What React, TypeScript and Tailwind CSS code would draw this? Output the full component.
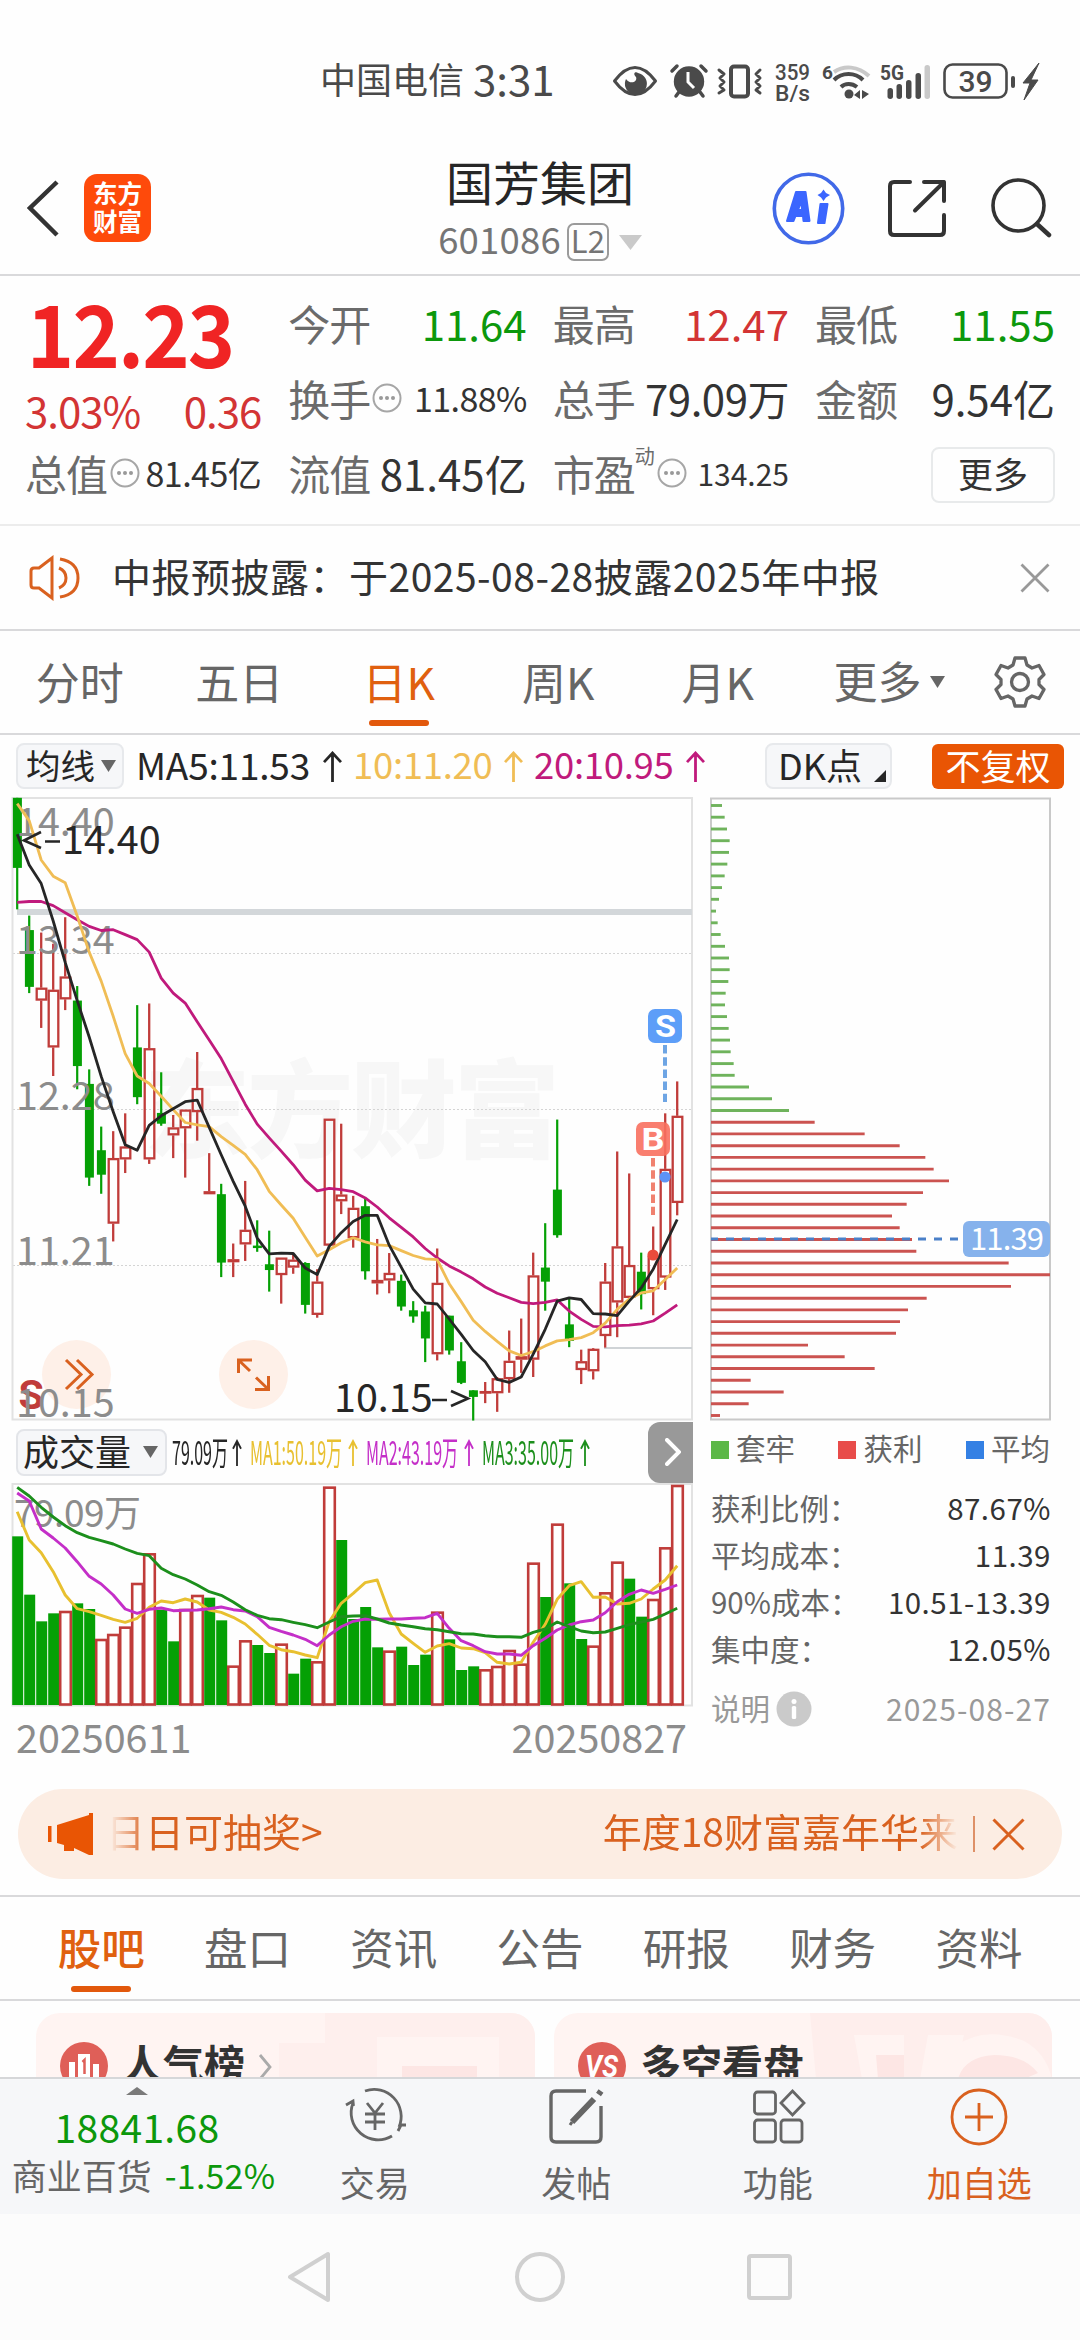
import React from "react";

/* ---------- chart data ---------- */

// [rising, high, bodyTop, bodyBottom, low], in chart ticks measured downwards
type Candle = [0 | 1, number, number, number, number];

const candles: Candle[] = [
  [0, 43, 43, 212, 312], [0, 327, 362, 499, 514], [1, 368, 501, 532, 598], [1, 395, 506, 645, 714],
  [1, 331, 474, 529, 555], [0, 497, 532, 690, 746], [0, 698, 733, 959, 979], [0, 836, 893, 952, 998],
  [1, 847, 912, 1070, 1113], [1, 804, 884, 915, 948], [0, 543, 645, 765, 782], [1, 539, 647, 915, 926],
  [0, 705, 803, 829, 834], [1, 808, 838, 857, 912], [1, 795, 795, 840, 959], [1, 656, 743, 801, 870],
  [1, 900, 992, 999, 999], [0, 974, 999, 1164, 1199], [1, 1118, 1156, 1163, 1199], [1, 967, 1085, 1120, 1160],
  [0, 1062, 1123, 1129, 1138], [0, 1087, 1168, 1182, 1234], [1, 1152, 1152, 1194, 1263], [1, 1145, 1157, 1176, 1191],
  [0, 1163, 1165, 1266, 1287], [1, 1180, 1210, 1290, 1297], [1, 817, 817, 1123, 1123], [1, 829, 1000, 1016, 1047],
  [1, 1003, 1032, 1105, 1128], [0, 1010, 1028, 1185, 1205], [1, 1107, 1206, 1214, 1241], [1, 1141, 1189, 1207, 1238],
  [0, 1193, 1208, 1270, 1280], [0, 1257, 1279, 1294, 1309], [0, 1268, 1282, 1347, 1404], [1, 1130, 1213, 1385, 1400],
  [0, 1292, 1292, 1376, 1386], [0, 1356, 1402, 1454, 1457], [0, 1472, 1472, 1488, 1545], [1, 1452, 1474, 1479, 1503],
  [1, 1440, 1443, 1479, 1524], [1, 1328, 1401, 1445, 1478], [1, 1299, 1390, 1398, 1430], [1, 1140, 1195, 1398, 1440],
  [0, 1069, 1176, 1210, 1280], [0, 819, 988, 1098, 1104], [0, 1250, 1313, 1353, 1368], [1, 1374, 1402, 1423, 1457],
  [1, 1370, 1372, 1426, 1446], [1, 1165, 1210, 1341, 1369], [1, 896, 1125, 1260, 1344], [1, 949, 1170, 1249, 1255],
  [0, 1140, 1186, 1240, 1277], [1, 1077, 1148, 1228, 1291], [1, 804, 938, 1200, 1230], [1, 727, 810, 1020, 1050],
];

const ma5 = [131, 205, 250, 340, 440, 532, 620, 715, 800, 880, 893, 833, 810, 793, 776, 772, 838, 904, 968, 1028, 1105, 1143, 1141, 1142, 1177, 1193, 1125, 1092, 1065, 1050, 1050, 1122, 1175, 1228, 1261, 1264, 1300, 1337, 1376, 1403, 1446, 1453, 1440, 1385, 1325, 1257, 1249, 1253, 1287, 1288, 1292, 1257, 1225, 1180, 1120, 1060];
const ma10 = [57, 98, 193, 232, 248, 328, 415, 485, 570, 660, 714, 732, 763, 795, 826, 832, 836, 860, 881, 903, 940, 992, 1025, 1057, 1103, 1148, 1133, 1116, 1104, 1114, 1121, 1123, 1135, 1147, 1155, 1157, 1215, 1258, 1303, 1330, 1354, 1377, 1388, 1379, 1365, 1353, 1350, 1345, 1333, 1310, 1277, 1252, 1237, 1232, 1205, 1177];
const ma20 = [295, 293, 293, 303, 320, 337, 353, 363, 361, 373, 385, 415, 478, 514, 538, 583, 627, 672, 727, 782, 830, 863, 895, 928, 965, 991, 985, 988, 993, 1008, 1030, 1056, 1079, 1102, 1130, 1153, 1172, 1187, 1203, 1223, 1238, 1249, 1260, 1263, 1260, 1254, 1281, 1301, 1318, 1319, 1316, 1315, 1312, 1305, 1286, 1266];

// [rising, top] in volume ticks measured downwards
const volumes: [0 | 1, number][] = [
  [0, 349], [0, 524], [0, 604], [0, 580], [1, 573], [0, 550], [0, 567], [1, 657], [1, 642], [1, 620], [1, 489], [1, 400],
  [0, 569], [0, 664], [1, 567], [1, 525], [0, 533], [0, 601], [1, 737], [1, 661], [0, 675], [0, 699], [1, 671], [0, 761],
  [0, 716], [1, 724], [1, 200], [0, 360], [0, 597], [0, 561], [0, 682], [1, 692], [0, 680], [0, 735], [0, 704], [1, 575],
  [0, 658], [0, 750], [0, 739], [1, 748], [1, 738], [1, 690], [1, 731], [1, 428], [0, 531], [1, 311], [0, 490], [0, 657],
  [1, 677], [1, 517], [1, 425], [0, 476], [0, 590], [1, 537], [1, 382], [1, 195],
];
const vma1 = [275, 360, 398, 455, 525, 566, 575, 586, 598, 607, 595, 562, 543, 548, 537, 546, 570, 577, 592, 612, 643, 676, 689, 695, 705, 713, 605, 550, 520, 488, 480, 578, 642, 670, 697, 678, 671, 684, 686, 698, 727, 732, 727, 667, 613, 538, 497, 485, 532, 531, 552, 550, 537, 507, 480, 437];
const vma2 = [219, 243, 327, 354, 384, 425, 469, 492, 525, 567, 580, 568, 564, 572, 571, 570, 566, 561, 569, 573, 590, 622, 634, 645, 658, 677, 645, 620, 604, 597, 598, 597, 597, 595, 593, 580, 625, 662, 677, 695, 702, 702, 706, 677, 655, 630, 615, 605, 600, 578, 545, 523, 510, 520, 508, 495];
const vma3 = [202, 228, 262, 291, 317, 338, 352, 362, 372, 387, 400, 407, 445, 464, 477, 495, 515, 526, 546, 569, 586, 596, 599, 607, 614, 623, 606, 590, 588, 587, 597, 609, 615, 620, 626, 629, 635, 641, 642, 647, 650, 650, 652, 637, 627, 606, 620, 633, 638, 636, 625, 614, 606, 598, 582, 565];

const chips = [96, 104, 111, 119, 117, 112, 104, 96, 87, 78, 83, 92, 105, 117, 119, 115, 107, 105, 111, 116, 120, 122, 131, 134, 177, 246, 297, 374, 524, 629, 706, 731, 777, 699, 650, 606, 629, 666, 679, 956, 1080, 963, 710, 654, 630, 618, 354, 464, 554, 182, 281, 176, 90];
const LOSING_CHIPS = 27;

const GREEN = "#05a005";
const RED = "#c03c3a";

const cx = (i: number) => 17.2 + i * 12;
const py = (t: number) => 780 + t / 2.412;
const vy = (t: number) => 1420 + t / 3;
const line = (data: number[], y: (t: number) => number) =>
  data.map((t, i) => `${cx(i).toFixed(1)},${y(t).toFixed(1)}`).join(" ");

function PriceChart() {
  return (
    <svg className="block" width="700" height="628" viewBox="0 797 700 628">
      <g fontSize="106" fontWeight="900" fill="#f7f7f7">
        <text x="144" y="1149" textLength="416">东方财富</text>
      </g>
      <g fill="none" stroke="#d4d4d4" strokeDasharray="2 2">
        <path d="M13 953.5H692M13 1109.5H692M13 1265.5H692" />
      </g>
      <rect x="12.5" y="798" width="679.5" height="621.5" fill="none" stroke="#e2e2e2" strokeWidth="2" />
      <rect x="17" y="909" width="675" height="6" fill="#d3d7da" />
      <path d="M604 1348H692" stroke="#cfd3d6" strokeWidth="2" />
      {candles.map(([up, high, top, bottom, low], i) => {
        const x = cx(i);
        const t = py(top);
        const b = py(bottom);
        return up ? (
          <g key={i} stroke={RED} strokeWidth="2.3" fill="none">
            {top > high && <path d={`M${x} ${py(high)}V${t}`} />}
            {low > bottom && <path d={`M${x} ${b}V${py(low)}`} />}
            <rect x={x - 4.5} y={t + 1} width="9.6" height={Math.max(b - t - 2, 0.5)} />
          </g>
        ) : (
          <g key={i} fill={GREEN}>
            <rect x={x - 1.1} y={py(high)} width="2.2" height={py(low) - py(high)} />
            <rect x={x - 4.3} y={t} width="9" height={b - t} />
          </g>
        );
      })}
      <g fontSize="39.5" fill="#8c8c8c">
        <text x="16" y="836">14.40</text>
        <text x="16" y="954">13.34</text>
        <text x="16" y="1110">12.28</text>
        <text x="16" y="1265">11.21</text>
      </g>
      <g fill="none" strokeWidth="2.8" strokeLinejoin="round">
        <polyline points={line(ma20, py)} stroke="#c01a7c" />
        <polyline points={line(ma10, py)} stroke="#f0bd55" />
        <polyline points={line(ma5, py)} stroke="#262626" />
      </g>
      <text x="62" y="854" fontSize="39.5" fill="#262626">14.40</text>
      <path d="M41 832 24 840.500 41 848M45 841.500H60" stroke="#262626" strokeWidth="2.600" fill="none" />
      <text x="334" y="1411.500" fontSize="39.5" fill="#262626">10.15</text>
      <path d="M432 1400H447M451 1391 468 1398.500 451 1406" stroke="#262626" strokeWidth="2.600" fill="none" />

      <rect x="648" y="1009" width="34" height="34" rx="7" fill="#5d9ef8" />
      <text x="655" y="1037" fontSize="31" fontWeight="700" fill="#fff" fontFamily="Roboto, sans-serif" textLength="21" lengthAdjust="spacingAndGlyphs">S</text>
      <path d="M665 1045V1102" stroke="#6ea5e4" strokeWidth="4" strokeDasharray="8.500 3.700" />
      <rect x="636" y="1122" width="34" height="34" rx="7" fill="#f8705f" fillOpacity="0.9" />
      <text x="641.500" y="1150" fontSize="31" fontWeight="700" fill="#fff" fontFamily="Roboto, sans-serif" textLength="23" lengthAdjust="spacingAndGlyphs">B</text>
      <path d="M653 1158V1215" stroke="#f0816f" strokeWidth="4" strokeDasharray="8.500 3.700" />
      <circle cx="665" cy="1177" r="5.600" fill="#5d93f6" />
      <circle cx="653" cy="1255" r="5.600" fill="#ea4b3c" />

      <circle cx="76.500" cy="1374.500" r="34.500" fill="#fef0e8" />
      <path d="M66 1360 81 1374.500 66 1389M77 1360 92 1374.500 77 1389" stroke="#d9611f" strokeWidth="3" fill="none" />
      <circle cx="253.500" cy="1374.500" r="34.500" fill="#fef0e8" />
      <g stroke="#d9611f" strokeWidth="3" fill="none">
        <path d="M238.500 1373V1360H252M239 1360.500 250 1371" />
        <path d="M255 1389.500H268.500V1376M256 1377.500 268 1389" />
      </g>
      <text x="18.500" y="1408.500" fontSize="41" fontWeight="700" fill="#c03c3a" fontFamily="Roboto, sans-serif">S</text>
      <text x="16" y="1417" fontSize="39.5" fill="#8c8c8c">10.15</text>
    </svg>
  );
}

function VolumeChart() {
  const base = vy(855);
  return (
    <svg className="block" width="700" height="228" viewBox="0 1482 700 228">
      <rect x="12.5" y="1484" width="679.5" height="221.500" fill="none" stroke="#e2e2e2" strokeWidth="2" />
      {volumes.map(([up, top], i) =>
        up ? (
          <rect key={i} x={cx(i) - 5} y={vy(top) + 1} width="10.600" height={base - vy(top) - 1.500} fill="#fff" stroke={RED} strokeWidth="2.600" />
        ) : (
          <rect key={i} x={cx(i) - 5} y={vy(top)} width="11" height={base - vy(top)} fill={GREEN} />
        ),
      )}
      <text x="14" y="1527" fontSize="37" fill="#8c8c8c" textLength="127">79.09万</text>
      <g fill="none" strokeWidth="2.900" strokeLinejoin="round">
        <polyline points={line(vma1, vy)} stroke="#e8c030" />
        <polyline points={line(vma2, vy)} stroke="#c42fc8" />
        <polyline points={line(vma3, vy)} stroke="#1c8f1c" />
      </g>
    </svg>
  );
}

function ChipChart() {
  return (
    <svg className="block" width="380" height="628" viewBox="700 797 380 628">
      <rect x="711" y="798.500" width="339" height="621" fill="none" stroke="#c9c9c9" strokeWidth="2" />
      {chips.map((end, i) => (
        <path
          key={i}
          d={`M711 ${(805.5 + i * 11.73).toFixed(1)}H${690 + end / 3}`}
          stroke={i < LOSING_CHIPS ? "#6fb35c" : "#cb5350"}
          strokeWidth="2.900"
        />
      ))}
      <path d="M711 1239H958" stroke="#4a80c8" strokeWidth="2.900" strokeDasharray="8 8" strokeDashoffset="1" />
      <rect x="963" y="1221" width="87" height="36" rx="6" fill="#86b2ec" />
      <text x="970" y="1250" fontSize="31" fill="#fff" textLength="74">11.39</text>
    </svg>
  );
}

/* ---------- small pieces ---------- */

const Down = ({ className, w, h }: { className: string; w: number; h: number }) => (
  <svg className={className} width={w} height={h} viewBox="0 0 10 10" preserveAspectRatio="none">
    <path d="M0 0H10L5 10Z" fill="currentColor" />
  </svg>
);

const Up = ({ className, w, h }: { className: string; w: number; h: number }) => (
  <svg className={className} width={w} height={h} viewBox={`0 0 ${w} ${h}`}>
    <path d={`M${w / 2} ${h}V2M1 ${h * 0.36} ${w / 2} 2 ${w - 1} ${h * 0.36}`} fill="none" stroke="currentColor" strokeWidth={w > 14 ? 2.8 : 1.8} />
  </svg>
);

const More = ({ className }: { className: string }) => (
  <svg className={className} width="30" height="30" viewBox="0 0 30 30">
    <circle cx="15" cy="15" r="13.500" fill="none" stroke="#a6a6a6" strokeWidth="2" />
    <g fill="#999"><circle cx="9" cy="15" r="2" /><circle cx="15" cy="15" r="2" /><circle cx="21" cy="15" r="2" /></g>
  </svg>
);

const Cell = ({ label, value, color, children }: { label: string; value: string; color: string; children?: React.ReactNode }) => (
  <div className="flex h-[75px] items-center justify-between text-[42px]">
    <div className="flex items-center tracking-[-1px] text-[#6b6b6b]">{label}{children}</div>
    <div className={color}>{value}</div>
  </div>
);

function StatusBar() {
  return (
    <div className="flex h-[116px] shrink-0 items-center pt-[45px] pl-[320px] text-[#4a4a4a]">
      <div className="w-[153px] pb-[5px] text-[36px]">中国电信</div>
      <div className="w-[139px] pb-[5px] text-[42px]">3:31</div>
      <svg width="440" height="46" viewBox="0 0 440 46">
        <g fill="none" stroke="#4a4a4a" strokeLinecap="round" strokeLinejoin="round">
          <path d="M2.500 23C10 13 16 9.500 23 9.500S36 13 43.500 23C36 33 30 36.500 23 36.500S10 33 2.500 23Z" strokeWidth="3" />
          <path d="M60 13 65 8M94 13 89 8M64 38 67 34M91 38 88 34" strokeWidth="3.500" />
          <rect x="119" y="8.500" width="17" height="30" rx="3" strokeWidth="4" />
          <path d="M107 12 112 16 108 20 112 24 108 28 112 32 107 35M148 12 144 16 148 20 144 24 148 28 144 32 148 35" strokeWidth="3" />
          <path d="M223 25C231 17 244 17 252 25" strokeWidth="4" strokeLinecap="butt" transform="translate(-1 -3)" />
          <path d="M229 29C233 25 240 25 245 29" strokeWidth="4" strokeLinecap="butt" />
          <path d="M222 14C232 7 246 8 257 18" stroke="#c9c9c9" strokeWidth="4" strokeLinecap="butt" />
          <rect x="332.500" y="6.500" width="62" height="33" rx="8" strokeWidth="2.600" />
        </g>
        <path d="M14 21A11 11 0 1 0 26 15C24 13 20 15 24 19C26 24 18 27 14 21Z" fill="#4a4a4a" />
        <circle cx="77" cy="23.500" r="15.200" fill="#4a4a4a" />
        <path d="M76 14V24L82 30" stroke="#fff" strokeWidth="3" fill="none" />
        <g fill="#4a4a4a">
          <circle cx="237" cy="36" r="4.500" />
          <path d="M242 37 248 32V41ZM250 32 257 36 250 41Z" />
          <rect x="275.500" y="30" width="5.500" height="11" rx="2.700" />
          <rect x="284.500" y="26" width="5.500" height="15" rx="2.700" />
          <rect x="294" y="22" width="5.500" height="19" rx="2.700" />
          <rect x="303.500" y="15" width="5.500" height="26" rx="2.700" />
          <rect x="312.500" y="7" width="5.500" height="34" rx="2.700" fill="#c9c9c9" />
          <rect x="399" y="18" width="4" height="12" rx="2" />
          <path d="M427 5 411 25H418L412 42 426 22H419Z" stroke="#4a4a4a" strokeLinejoin="round" />
          <g fontFamily="Roboto, sans-serif">
            <text x="163" y="22" fontSize="22.500" fontWeight="500" textLength="35" lengthAdjust="spacingAndGlyphs">359</text>
            <text x="163" y="43" fontSize="22.500" fontWeight="500" textLength="35" lengthAdjust="spacingAndGlyphs">B/s</text>
            <text x="210" y="21" fontSize="19" fontWeight="700">6</text>
            <text x="268" y="22" fontSize="20.500" fontWeight="700" textLength="24" lengthAdjust="spacingAndGlyphs">5G</text>
            <text x="363.500" y="34" fontSize="30" fontWeight="500" textAnchor="middle">39</text>
          </g>
        </g>
      </svg>
    </div>
  );
}

function Header() {
  return (
    <div className="flex h-[160px] shrink-0 border-b-2 border-[#d9d9db] pl-[27px] pt-[56px]">
      <svg width="32" height="60" viewBox="0 0 32 60" className="mt-[7px]">
        <path d="M30 3 3 29 30 56" fill="none" stroke="#333" strokeWidth="4.500" />
      </svg>
      <div className="ml-[25px] mt-[2px] flex h-[68px] w-[67px] flex-col items-center rounded-[13px] bg-[#fe4a0b] pt-[8px] text-[24.500px] leading-[28px] font-bold text-white">
        <div className="-mt-[3px]">东方</div>
        <div className="-mt-[0px]">财富</div>
      </div>
      <div className="-mt-[15px] ml-[239px] flex w-[300px] flex-col items-center">
        <div className="text-[47px] text-[#262626]">国芳集团</div>
        <div className="mt-[19px] flex h-[38px] items-center text-[#757575]">
          <span className="-mt-[5px] text-[36.500px] tracking-[0.200px]">601086</span>
          <span className="ml-[6px] flex h-[38px] w-[42px] items-center justify-center rounded-[7px] border-2 border-[#9b9b9b] pb-[5px] text-[31px]">L2</span>
          <Down className="ml-[10px] text-[#cacaca]" w={23} h={15} />
        </div>
      </div>
      <svg className="ml-[82px]" width="73" height="73" viewBox="0 0 73 73">
        <circle cx="36.500" cy="36.500" r="34.200" fill="#fff" stroke="#4169e8" strokeWidth="3.600" />
        <g fill="#3b66ff" stroke="#3b66ff" strokeWidth="2" strokeLinejoin="round">
          <path d="M24 20H33.500L37.500 49H31.500L31 44H23.500L21.500 49H15Z M26 38H30L29.500 29Z" fillRule="evenodd" />
          <path d="M48.500 32H55.500L52.500 51H46Z" />
        </g>
        <path d="M51.500 17.500 54 21 58 23 54 25.500 51.500 29 49 25.500 45.500 23 49 21Z" fill="#3b66ff" />
      </svg>
      <svg className="ml-[43px] mt-[6px]" width="60" height="60" viewBox="0 0 60 60">
        <path d="M22 4H6Q2 4 2 8V53Q2 57 6 57H52Q56 57 56 53V37M36 4H56V23M56 4 27 32.500" fill="none" stroke="#333" strokeWidth="4" strokeLinecap="round" strokeLinejoin="round" />
      </svg>
      <svg className="ml-[42px] mt-[5px]" width="62" height="62" viewBox="0 0 62 62">
        <circle cx="28.500" cy="28.500" r="25.500" fill="none" stroke="#333" strokeWidth="3.600" />
        <path d="M47 47 59 58" stroke="#333" strokeWidth="4.500" strokeLinecap="round" />
      </svg>
    </div>
  );
}

function Quote() {
  return (
    <div className="flex h-[250px] shrink-0 gap-[27px] border-b-2 border-[#ececec] px-[25px] pt-[9px]">
      <div className="w-[237px]">
        <div className="flex h-[100px] origin-left scale-x-[.935] items-center pb-[8px] pl-[2px] text-[86px] font-bold tracking-[-2px] text-[#f02424]">12.23</div>
        <div className="flex h-[50px] items-center justify-between text-[42px] tracking-[-1px] text-[#d33434]">
          <span>3.03%</span>
          <span>0.36</span>
        </div>
        <div className="flex h-[75px] items-center text-[42px] text-[#6b6b6b]">
          <span className="tracking-[-1px]">总值</span>
          <More className="ml-[3px] shrink-0" />
          <span className="ml-auto text-[34px] tracking-[-0.5px] text-[#333]">81.45亿</span>
        </div>
      </div>
      <div className="w-[239px]">
        <Cell label="今开" value="11.64" color="text-[#0c980c]" />
        <div className="flex h-[75px] items-center text-[42px] text-[#6b6b6b]">
          <span className="tracking-[-1px]">换手</span>
          <More className="ml-[2px] shrink-0" />
          <span className="ml-auto text-[34px] tracking-[-0.6px] text-[#333]">11.88%</span>
        </div>
        <Cell label="流值" value="81.45亿" color="text-[#333]" />
      </div>
      <div className="-ml-[1px] w-[237px]">
        <Cell label="最高" value="12.47" color="text-[#d33434]" />
        <Cell label="总手" value="79.09万" color="text-[#333] tracking-[-0.5px]" />
        <div className="flex h-[75px] items-center text-[42px] text-[#6b6b6b]">
          <span className="tracking-[-1px]">市盈</span>
          <span className="-mt-[33px] text-[20px]">动</span>
          <More className="ml-[2px] shrink-0" />
          <span className="ml-auto text-[30px] text-[#333]">134.25</span>
        </div>
      </div>
      <div className="-ml-[1px] w-[240px] shrink-0">
        <Cell label="最低" value="11.55" color="text-[#0c980c]" />
        <Cell label="金额" value="9.54亿" color="text-[#333]" />
        <div className="ml-auto mt-[12px] flex h-[56px] w-[124px] items-center justify-center rounded-[8px] border-2 border-[#e8eaeb] pb-[5px] text-[35px] text-[#333]">更多</div>
      </div>
    </div>
  );
}

function Notice() {
  return (
    <div className="flex h-[105px] shrink-0 items-center border-b-2 border-[#d9d9db] pl-[29px]">
      <svg width="52" height="46" viewBox="0 0 52 46">
        <path d="M2 16Q2 13 5 13H10L23 3V43L10 33H5Q2 33 2 30ZM30 13Q37 16 37 23T30 33M31 4Q49 7 49 23T31 42" fill="none" stroke="#d9611f" strokeWidth="3" />
      </svg>
      <div className="ml-[31px] pb-[4px] text-[39px] tracking-[0.5px] text-[#333]">中报预披露：于2025-08-28披露2025年中报</div>
      <svg className="ml-auto mr-[30px]" width="30" height="30" viewBox="0 0 30 30">
        <path d="M1.500 1.500 28.500 28.500M28.500 1.500 1.500 28.500" stroke="#999" strokeWidth="2.800" />
      </svg>
    </div>
  );
}

function PeriodTabs() {
  return (
    <div className="flex h-[104px] shrink-0 items-center border-b-2 border-[#d9d9db] text-[44px] text-[#666]">
      {["分时", "五日", "日K", "周K", "月K"].map((t) => (
        <div key={t} className={`flex h-[102px] w-[159.500px] flex-col items-center pt-[28px] ${t === "日K" ? "text-[#e0600f]" : ""}`}>
          {t}
          {t === "日K" && <div className="mt-[17px] h-[6px] w-[60px] rounded-[3px] bg-[#e2580c]" />}
        </div>
      ))}
      <div className="ml-[36px] pb-[4px]">更多</div>
      <Down className="ml-[8px] text-[#666]" w={15} h={12} />
      <svg className="ml-[49px] mb-[1px]" width="52" height="54" viewBox="0 0 52 54">
        <path d="M21 3H31L33 10 38 13 45 10.500 50 19.500 45 24.500V29.500L50 34.500 45 43.500 38 41 33 44 31 51H21L19 44 14 41 7 43.500 2 34.500 7 29.500V24.500L2 19.500 7 10.500 14 13 19 10Z" fill="none" stroke="#666" strokeWidth="3.300" strokeLinejoin="round" />
        <circle cx="26" cy="27" r="8.500" fill="none" stroke="#666" strokeWidth="3.300" />
      </svg>
    </div>
  );
}

function MaRow() {
  return (
    <div className="flex h-[62px] shrink-0 items-center pl-[16px] text-[36.500px] whitespace-nowrap">
      <div className="flex h-[46px] w-[108px] items-center rounded-[8px] border-2 border-[#e7e9ec] bg-[#f6f7f9] pl-[8px] text-[34.500px] text-[#262626]">
        <span className="-mt-[4px]">均线</span>
        <Down className="ml-[6px] shrink-0 text-[#666]" w={15} h={12} />
      </div>
      <div className="ml-[12px] w-[187px] pb-[4px] text-[37px] tracking-[-0.200px] text-[#262626]">MA5:11.53</div>
      <Up className="text-[#262626]" w={19} h={31} />
      <div className="ml-[11px] w-[151px] pb-[4px] tracking-[-0.3px] text-[#f0bd55]">10:11.20</div>
      <Up className="text-[#f0bd55]" w={19} h={31} />
      <div className="ml-[11px] w-[152px] pb-[4px] tracking-[-0.3px] text-[#c01a7c]">20:10.95</div>
      <Up className="text-[#c01a7c]" w={19} h={31} />
      <div className="ml-[60px] flex h-[46px] w-[127px] items-center rounded-[8px] border-2 border-[#e7e9ec] bg-[#f6f7f9] pl-[11px] text-[36px] text-[#262626]">
        <span className="-mt-[4px]">DK点</span>
        <svg className="ml-auto mr-[4px] mt-[19px]" width="12" height="12" viewBox="0 0 12 12"><path d="M12 0V12H0Z" fill="#262626" /></svg>
      </div>
      <div className="ml-[40px] flex h-[45px] w-[132px] items-center justify-center rounded-[6px] bg-[#e95504] pb-[4px] text-[35px] text-white">不复权</div>
    </div>
  );
}

function VolumeHeader() {
  const label = "h-[33px] origin-left whitespace-nowrap scale-x-[.485]";
  return (
    <div className="flex h-[57px] items-center pl-[16px] text-[33px]">
      <div className="-mt-[3px] flex h-[47px] w-[151px] shrink-0 items-center rounded-[8px] border-2 border-[#e3e5e9] bg-[#f6f7f9] pl-[5px] text-[36px] text-[#262626]">
        <span className="-mt-[4px]">成交量</span>
        <Down className="ml-[12px] text-[#666]" w={15} h={12} />
      </div>
      <div className="-mt-[4px] flex items-center">
        <div className="ml-[5px] w-[60px]"><div className={`${label} text-[#262626]`}>79.09万</div></div>
        <Up className="mt-[1px] text-[#262626]" w={10} h={27} />
        <div className="ml-[8px] w-[98px]"><div className={`${label} text-[#e8c030]`}>MA1:50.19万</div></div>
        <Up className="mt-[1px] text-[#e8c030]" w={10} h={27} />
        <div className="ml-[8px] w-[98px]"><div className={`${label} text-[#c42fc8]`}>MA2:43.19万</div></div>
        <Up className="mt-[1px] text-[#c42fc8]" w={10} h={27} />
        <div className="ml-[8px] w-[98px]"><div className={`${label} text-[#1c8f1c]`}>MA3:35.00万</div></div>
        <Up className="mt-[1px] text-[#1c8f1c]" w={10} h={27} />
      </div>
      <div className="-mt-[3px] ml-auto mr-[7px] flex h-[61px] w-[45px] items-center justify-center rounded-l-[12px] bg-[#999]">
        <svg width="16" height="28" viewBox="0 0 16 28" className="ml-[4px]"><path d="M2 2 14 14 2 26" fill="none" stroke="#fff" strokeWidth="4" strokeLinecap="round" /></svg>
      </div>
    </div>
  );
}

function ChipPanel() {
  const rows = [["获利比例：", "87.67%"], ["平均成本：", "11.39"], ["90%成本：", "10.51-13.39"], ["集中度：", "12.05%"]];
  return (
    <div className="w-[380px] pl-[11px] pr-[30px]">
      <div className="flex h-[50px] items-center justify-between text-[29.500px] text-[#666]">
        <div className="flex items-center gap-[7px]"><i className="h-[18px] w-[18px] bg-[#5cb848]" /><span className="-mt-[4px]">套牢</span></div>
        <div className="flex items-center gap-[7px]"><i className="h-[18px] w-[18px] bg-[#e84c4a]" /><span className="-mt-[4px]">获利</span></div>
        <div className="flex items-center gap-[7px]"><i className="h-[18px] w-[18px] bg-[#3480e4]" /><span className="-mt-[4px]">平均</span></div>
      </div>
      <div className="mt-[9px]">
        {rows.map(([k, v]) => (
          <div key={k} className="flex h-[47px] items-center justify-between text-[29.500px]">
            <span className="text-[#666]">{k}</span>
            <span className="-mr-[1px] tracking-[0.500px] text-[#333]">{v}</span>
          </div>
        ))}
      </div>
      <div className="mt-[12px] flex h-[50px] items-center text-[29.500px] text-[#999]">
        <span className="pb-[2px]">说明</span>
        <svg className="ml-[6px]" width="36" height="36" viewBox="0 0 36 36">
          <circle cx="18" cy="18" r="17.500" fill="#cacaca" />
          <circle cx="18" cy="10.500" r="2.500" fill="#fff" />
          <rect x="15.800" y="15" width="4.400" height="13" rx="1.500" fill="#fff" />
        </svg>
        <span className="-mr-[1px] ml-auto pb-[2px] text-[30px] tracking-[1.100px]">2025-08-27</span>
      </div>
    </div>
  );
}

function Banner() {
  return (
    <div className="mx-[18px] mt-[13px] flex h-[90px] shrink-0 items-center rounded-full bg-[#fcede3] pl-[30px] text-[39px] text-[#d9611f]">
      <svg width="46" height="42" viewBox="0 0 46 42">
        <path d="M0 13H3.500V29H0ZM9 12 41 2V0H45V42H41L26 35V38H16V32L9 30Z" fill="#e95504" />
      </svg>
      <div className="ml-[16px] flex w-[848px] justify-between overflow-hidden pb-[8px] whitespace-nowrap leading-[50px] [mask-image:linear-gradient(to_right,transparent,black_38px,black_810px,transparent)]">
        <span className="-ml-[4px]">日日可抽奖&gt;</span>
        <span>年度18财富嘉年华来</span>
      </div>
      <div className="ml-[15px] h-[36px] w-[2px] bg-[#de9067]" />
      <svg className="ml-[17px]" width="33" height="33" viewBox="0 0 33 33"><path d="M1.500 1.500 31.500 31.500M31.500 1.500 1.500 31.500" stroke="#d9611f" strokeWidth="3" /></svg>
    </div>
  );
}

function Cards() {
  return (
    <div className="flex h-[76px] shrink-0 gap-[19px] overflow-hidden pl-[36px] pt-[12px] text-[41px] font-bold text-[#333]">
      <div className="relative h-[120px] w-[499px] overflow-hidden rounded-[24px] bg-[#fff4f2]">
        <svg className="absolute top-0 left-0" width="499" height="66" viewBox="0 0 499 66">
          <path d="M289 0H499V66H243V30H289Z" fill="#feefed" />
          <path d="M341 24H463V66H341Z" fill="#fff4f2" />
          <path d="M366 53H441V66H366Z" fill="#fde6e4" />
        </svg>
        <div className="relative flex items-center pl-[24px] pt-[29px]">
          <svg width="48" height="48" viewBox="0 0 48 48">
            <circle cx="24" cy="24" r="24" fill="#df5f58" />
            <path d="M9 20H15V40H9ZM18 12H30V40H18ZM33 22H39V40H33Z" fill="#fff" />
            <path d="M22.500 20 24.500 18V32" stroke="#df5f58" strokeWidth="2.500" fill="none" />
          </svg>
          <span className="-mt-[7px] ml-[14px]">人气榜</span>
          <svg className="ml-[13px] mt-[2px]" width="14" height="26" viewBox="0 0 14 26"><path d="M2 1 12 13 2 25" stroke="#aaa" strokeWidth="2.800" fill="none" /></svg>
        </div>
      </div>
      <div className="relative h-[120px] w-[498px] overflow-hidden rounded-[24px] bg-[#fff4f2]">
        <svg className="absolute top-0 left-0" width="498" height="66" viewBox="0 0 498 66">
          <path d="M256 0H498V66H262Z" fill="#feeeec" />
          <path d="M300 22H350V66H308ZM374 22H410L400 66H366ZM400 34Q430 12 470 28 492 40 498 66H384Z" fill="#fff4f2" />
          <path d="M322 42H350V66H324ZM404 66Q410 44 440 42 470 42 484 60L470 66Z" fill="#fde6e4" />
        </svg>
        <div className="relative flex items-center pl-[24px] pt-[29px]">
          <svg width="48" height="48" viewBox="0 0 48 48">
            <circle cx="24" cy="24" r="24" fill="#df5f58" />
            <text x="7" y="35" fontSize="31" fontStyle="italic" fontWeight="700" fill="#fff" fontFamily="Roboto, sans-serif" textLength="33" lengthAdjust="spacingAndGlyphs">VS</text>
          </svg>
          <span className="-mt-[7px] ml-[14px]">多空看盘</span>
        </div>
      </div>
    </div>
  );
}

const barIcons: Record<string, React.ReactNode> = {
  交易: (
    <g>
      <path d="M21 5A27 27 0 0 1 55 41M48 50A27 27 0 0 1 9 17M2 19 9 15 9.500 20M54 45 57 39 62 39" />
      <path d="M23 17 31 27 39 17M31 27V44M21 28H41M21 36H41" />
    </g>
  ),
  发帖: (
    <g>
      <path d="M41 5H11Q6 5 6 10V51Q6 56 11 56H51Q56 56 56 51V20" strokeWidth="3.400" />
      <path d="M49 13 27 36M56 5 53.500 8.500" strokeWidth="6" />
      <path d="M27 36 25 39" strokeWidth="3" />
    </g>
  ),
  功能: (
    <g>
      <rect x="7.500" y="6" width="21" height="22" rx="3" />
      <rect x="7.500" y="34" width="21" height="22" rx="3" />
      <rect x="34" y="34" width="21" height="22" rx="3" />
      <path d="M45.500 5 57 17 45.500 29 34 17Z" />
    </g>
  ),
  加自选: (
    <g stroke="#d9611f">
      <circle cx="31" cy="31" r="27" />
      <path d="M31 17V45M17 31H45" />
    </g>
  ),
};

function BottomBar() {
  return (
    <div className="flex h-[137px] shrink-0 border-t-2 border-[#d6d7d9] bg-[#f6f7f9] text-[#666]">
      <div className="flex w-[274px] flex-col items-center">
        <svg className="mt-[8px]" width="22" height="8" viewBox="0 0 22 8"><path d="M0 8 11 0 22 8Z" fill="#7a7a7a" /></svg>
        <div className="mt-[12px] text-[39px] tracking-[0.300px] text-[#0c980c]">18841.68</div>
        <div className="mt-[11px] flex items-center whitespace-nowrap pl-[13px]">
          <span className="text-[35px]">商业百货</span>
          <span className="ml-[13px] text-[34px] tracking-[0.200px] text-[#0c980c]">-1.52%</span>
        </div>
      </div>
      {Object.keys(barIcons).map((name) => (
        <div key={name} className="flex w-[201.500px] flex-col items-center pt-[7px]">
          <svg width="62" height="62" viewBox="0 0 62 62" fill="none" stroke="#666" strokeWidth="2.800">{barIcons[name]}</svg>
          <div className={`mt-[16px] text-[35px] ${name === "加自选" ? "text-[#d9611f]" : ""}`}>{name}</div>
        </div>
      ))}
    </div>
  );
}

export default function App() {
  return (
    <div className="flex h-[2340px] w-[1080px] flex-col overflow-hidden bg-[#fefefe] font-['Noto_Sans_CJK_SC',sans-serif] leading-none">
      <StatusBar />
      <Header />
      <Quote />
      <Notice />
      <PeriodTabs />
      <MaRow />
      <div className="flex h-[979px] shrink-0">
        <div className="w-[700px]">
          <PriceChart />
          <VolumeHeader />
          <VolumeChart />
          <div className="flex justify-between pl-[16px] pr-[13px] pt-[6px] text-[39.500px] text-[#8c8c8c]">
            <span>20250611</span>
            <span>20250827</span>
          </div>
        </div>
        <div>
          <ChipChart />
          <ChipPanel />
        </div>
      </div>
      <Banner />
      <div className="mt-[16px] flex h-[106px] shrink-0 border-y-2 border-[#d9d9db] pl-[28px] text-[43.500px] text-[#666]">
        {["股吧", "盘口", "资讯", "公告", "研报", "财务", "资料"].map((t, i) => (
          <div key={t} className={`flex w-[146.300px] flex-col items-center pt-[28px] ${i === 0 ? "font-medium text-[#e0600f]" : ""}`}>
            {t}
            {i === 0 && <div className="mt-[17px] h-[6px] w-[60px] rounded-[3px] bg-[#e2580c]" />}
          </div>
        ))}
      </div>
      <Cards />
      <BottomBar />
      <div className="flex flex-1 bg-[#fcfcfc] pl-[284px] pt-[36px]">
        <svg width="510" height="54" viewBox="0 0 510 54" fill="none" stroke="#d0d0d0" strokeWidth="4" strokeLinejoin="round">
          <path d="M44 4V50L6 27Z" />
          <circle cx="256" cy="27" r="23" />
          <rect x="465" y="6" width="41" height="42" rx="2" />
        </svg>
      </div>
    </div>
  );
}
